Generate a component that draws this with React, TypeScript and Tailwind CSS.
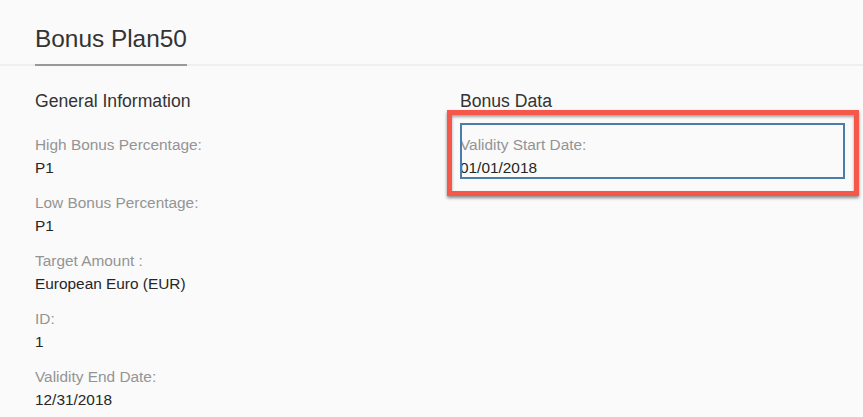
const labelCls = 'text-[15.4px] leading-[23px] text-[#949494]'
const valueCls = 'text-[15.4px] leading-[23px] text-[#262626]'

function Field({ label, value }: { label: string; value: string }) {
  return (
    <div className="pt-[12px]">
      <div className={labelCls}>{label}</div>
      <div className={valueCls}>{value}</div>
    </div>
  )
}

const general = [
  { label: 'High Bonus Percentage:', value: 'P1' },
  { label: 'Low Bonus Percentage:', value: 'P1' },
  { label: 'Target Amount :', value: 'European Euro (EUR)' },
  { label: 'ID:', value: '1' },
  { label: 'Validity End Date:', value: '12/31/2018' },
]

export default function App() {
  return (
    <div
      className="w-full h-[417px] overflow-hidden bg-[#fafafa]"
      style={{ fontFamily: '"Liberation Sans", Arial, sans-serif' }}
    >
      {/* object header with single tab */}
      <div className="px-[35px] pt-[23px] border-b-2 border-[#efefef]">
        <div className="inline-block -mb-[2px] pb-[9px] border-b-2 border-[#999999]">
          <h1 className="text-[24.4px] leading-[32px] text-[#333333]">Bonus Plan50</h1>
        </div>
      </div>

      <div className="grid grid-cols-[425px_385px] px-[35px] pt-[23px]">
        <div>
          <h2 className="text-[17.6px] leading-[24px] text-[#333333]">General Information</h2>
          <div className="mt-[8px]">
            {general.map((f) => (
              <Field key={f.label} label={f.label} value={f.value} />
            ))}
          </div>
        </div>

        <div>
          <h2 className="text-[17.6px] leading-[24px] text-[#333333]">Bonus Data</h2>
          <div className="mt-[8px] relative">
            <Field label="Validity Start Date:" value="01/01/2018" />
            {/* focus outline */}
            <div className="absolute left-0 right-0 top-[2px] bottom-0 border-2 border-[#4a7dab] pointer-events-none" />
            {/* annotation box */}
            <div className="absolute -left-[13px] -right-[14px] -top-[11px] -bottom-[17px] border-[5.5px] border-[#f5574a] shadow-[0_2px_3px_rgba(0,0,0,0.45),inset_0_2px_3px_rgba(0,0,0,0.35)] pointer-events-none" />
          </div>
        </div>
      </div>
    </div>
  )
}
